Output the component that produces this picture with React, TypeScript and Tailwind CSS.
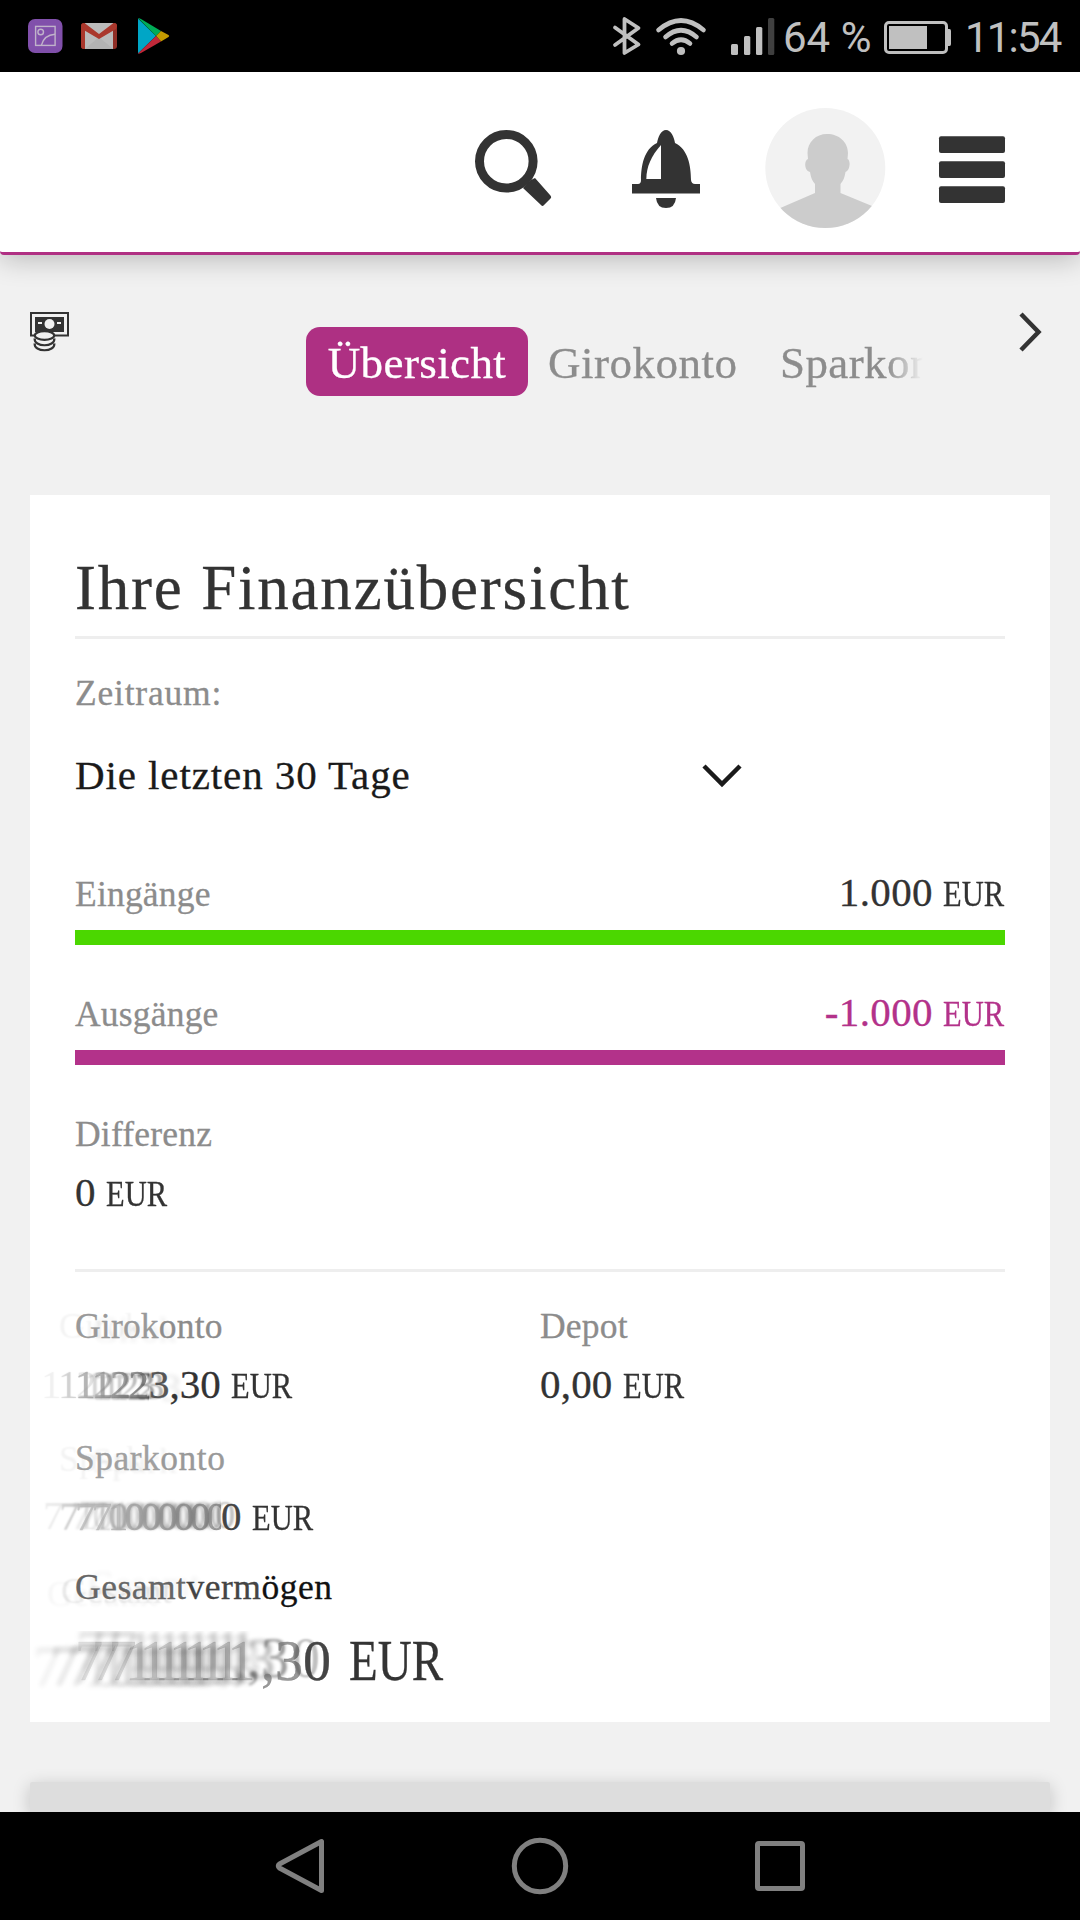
import type { ReactNode } from "react";

const StatusBar = () => (
    <div className="h-[72px] shrink-0 bg-black flex items-center">
        <svg className="w-[180px] h-[72px]" viewBox="0 0 180 72">
            {/* Galerie */}
            <rect x="28" y="19" width="34.5" height="34" rx="7" fill="#8150ab" />
            <g fill="none" stroke="#c0b3ca" strokeWidth="1.4">
                <rect x="35.6" y="26.4" width="19.5" height="19" />
                <circle cx="40.7" cy="32" r="2.8" />
                <path d="M41.3 45.4C43 39 48 34.7 55 34.3" />
            </g>
            {/* Mail */}
            <rect x="81" y="23" width="36" height="26" rx="3" fill="#8f2e26" />
            <path d="M85 23H113V49H85Z" fill="#bbb" />
            <path d="M85 49L99 37L113 49Z" fill="#b2b2b2" />
            <path d="M81 26Q81 23 84.5 23L99 34L113.5 23Q117 23 117 26L116 29L99 39L82 29Z" fill="#aa372c" />
            <path d="M81 26L85 29V49H84Q81 49 81 46Z" fill="#aa372c" />
            {/* Play Store */}
            <path d="M138 18.5L156 36L138 53.5Z" fill="#00a6c6" />
            <path d="M138 18Q139 18 141 19L161 31L156 36Z" fill="#00ac57" />
            <path d="M161 31L168.5 35Q170 36 168.5 37L161 41.5L156 36Z" fill="#c39a00" />
            <path d="M156 36L161 41.5L141 53Q139 54 138 53.5Z" fill="#c0293a" />
        </svg>
        <div className="grow" />
        <svg className="w-[170px] h-[72px]" viewBox="610 0 170 72" fill="none">
            <path d="M615 27.5L638.5 44.5L624.5 53V19L638.5 28L615 45" stroke="#c0c0c0" strokeWidth="3.8" strokeLinejoin="round" strokeLinecap="round" />
            <g stroke="#c0c0c0" strokeWidth="4.6" strokeLinecap="round">
                <path d="M658.5 30Q681 11 703.5 30" />
                <path d="M665.5 37Q681 23.5 696.5 37" />
                <path d="M672 43.5Q681 36 690 43.5" />
            </g>
            <circle cx="681" cy="51" r="4.1" fill="#c0c0c0" />
            <rect x="731" y="44" width="7" height="11" rx="1.5" fill="#c0c0c0" />
            <rect x="744" y="36" width="6.3" height="19" rx="1.5" fill="#c0c0c0" />
            <rect x="756" y="27" width="6.3" height="28" rx="1.5" fill="#c0c0c0" />
            <rect x="768" y="18" width="6.3" height="37" rx="1.5" fill="#404040" />
        </svg>
        <span className="w-[104px] pl-[3px] pt-[3px] font-[Roboto] text-[42px] leading-[72px] text-[#c0c0c0] whitespace-nowrap">64 %</span>
        <svg className="w-[70px] h-[72px]" viewBox="884 0 70 72" fill="none">
            <rect x="885.5" y="22.5" width="61" height="30" rx="3.5" stroke="#c0c0c0" strokeWidth="3" />
            <rect x="889" y="26" width="38" height="23" fill="#c0c0c0" />
            <path d="M947 29H949.5Q951 29 951 31V44Q951 46 949.5 46H947Z" fill="#c0c0c0" />
        </svg>
        <span className="w-[126px] pl-[11px] pt-[3px] font-[Roboto] text-[42px] leading-[72px] tracking-[-1.8px] text-[#c0c0c0]">11:54</span>
    </div>
);

const Header = () => (
    <header className="relative z-10 h-[183px] shrink-0 bg-white border-b-3 border-[#b03083] rounded-b-[4px] shadow-[0_4px_28px_rgba(0,0,0,0.24)] flex justify-end">
        <svg className="w-[640px] h-[180px]" viewBox="440 72 640 180">
            <g fill="#333">
                <path d="M531 180L535 178L550 195Q552 197 550.5 198.5L544 205Q542.5 207 541 205L523 188Z" />
                <circle cx="506.3" cy="161.3" r="26.8" fill="none" stroke="#333" strokeWidth="9" />
                <path d="M666 130C661 130 658 137 657 143C644 149 641 166 641 180Q641 184 638 184H632V193.5H700V184H695Q691.5 184 691 180C691 166 688 149 675 143C674 137 671 130 666 130Z" />
                <path d="M656 198H676Q675 208 666 208Q657 208 656 198Z" />
                <rect x="939" y="136.3" width="66" height="16.7" rx="2" />
                <rect x="939" y="161.3" width="66" height="16.7" rx="2" />
                <rect x="939" y="186.3" width="66" height="16.7" rx="2" />
            </g>
            <path d="M661 145V179H646.3C646.5 167 651 156 661 145Z" fill="#fff" />
            <clipPath id="avatar">
                <circle cx="825.3" cy="168" r="60" />
            </clipPath>
            <g clipPath="url(#avatar)">
                <rect x="765" y="108" width="121" height="120" fill="#f2f2f2" />
                <path
                    d="M827 134C839 134 848 142 848 153L847.5 159C851 160 850 171 845.5 172C844.5 178 843 181 840.5 184V193L872 206V230H778V209L815 193V184C812.5 181 811 178 810 172C804 171 804 160 808 159L807.5 153C807.5 142 816 134 827 134Z"
                    fill="#ccc"
                />
            </g>
        </svg>
    </header>
);

const SubNav = () => (
    <nav className="h-[240px] shrink-0 flex items-start pl-[30px] text-[45px] text-[#8c8c8c]">
        <svg className="mt-[57px] w-[40px] h-[40px] shrink-0" viewBox="0 0 40 40" fill="none">
            <rect x="1" y="1" width="37" height="22.5" stroke="#333" strokeWidth="2" />
            <rect x="5" y="5" width="29" height="15" fill="#333" />
            <circle cx="19.5" cy="12" r="5" fill="#f1f1f1" />
            <path d="M8 11H12M27 11H31" stroke="#f1f1f1" strokeWidth="2" />
            <path d="M4.5 23V34C6 40 24 40 25 34V23Z" fill="#f1f1f1" />
            <g stroke="#333" strokeWidth="2.2">
                <ellipse cx="14.5" cy="23.5" rx="9.7" ry="4.3" fill="#f1f1f1" />
                <path d="M4.7 26.5C3.5 35.5 25.5 35.5 24.3 26.5M4.7 31.5C3.5 40.5 25.5 40.5 24.3 31.5" />
            </g>
        </svg>
        <div className="mt-[72px] ml-[236px] w-[620px] flex overflow-hidden whitespace-nowrap leading-[73px] h-[69px] tracking-[0.4px] [mask-image:linear-gradient(to_right,#000_580px,transparent_617px)]">
            <span className="w-[222px] h-[69px] shrink-0 text-center rounded-[14px] bg-[#ae3083] text-white">Übersicht</span>
            <span className="ml-[20px] w-[232px] shrink-0 tracking-[0.5px]">Girokonto</span>
            <span>Sparkonto</span>
        </div>
        <svg className="mt-[57px] ml-[91px] w-[28px] h-[42px] shrink-0" viewBox="0 0 28 42" fill="none">
            <path d="M4 2L21.5 20L4 38" stroke="#333" strokeWidth="4.5" />
        </svg>
    </nav>
);

const Label = ({ children }: { children: ReactNode }) => (
    <div className="h-12 text-[35.5px] leading-[48px] tracking-[0.2px] text-[#8c8c8c] whitespace-nowrap">{children}</div>
);

// Betrag mit kleinerer Währung
const Amount = ({ children }: { children: ReactNode }) => (
    <div className="h-12 text-[41px] leading-[48px] whitespace-nowrap">
        {children}
        <span className="inline-block w-[62px] ml-[10px] text-[35.5px] leading-none">
            <span className="inline-block origin-left scale-x-[0.86]">EUR</span>
        </span>
    </div>
);

const Entry = ({ label, amount, color, bar }: { label: string; amount: string; color: string; bar: string }) => (
    <div>
        <div className={`h-12 flex justify-between items-baseline ${color}`}>
            <Label>{label}</Label>
            <Amount>
                <span className="tracking-[0.4px]">{amount}</span>
            </Amount>
        </div>
        <div className={`mt-[14px] h-[15px] ${bar}`} />
    </div>
);

const Accounts = () => (
    <div className="grid grid-cols-2">
        <div>
            <Label>
                <span className="text-[#999] [text-shadow:-16px_0_2px_rgb(0_0_0/0.05),18px_4px_4px_rgb(0_0_0/0.07)]">Girok</span>onto
            </Label>
            <div className="mt-[10px]">
                <Amount>
                    <span className="inline-block w-[114px] -ml-10 pl-10 tracking-[-2.2px] text-[#555]/70 [mask-image:linear-gradient(to_right,rgb(0_0_0/0.3)_20%,#000)] [text-shadow:-34px_0_1px_rgb(0_0_0/0.2),-17px_0_1px_rgb(0_0_0/0.35),9px_1px_2px_rgb(0_0_0/0.3),17px_2px_2px_rgb(0_0_0/0.25)]">
                        1122
                    </span>
                    <span className="text-[#555] [text-shadow:-14px_1px_2px_rgb(0_0_0/0.4),-5px_1px_2px_rgb(0_0_0/0.3),12px_3px_4px_rgb(0_0_0/0.1)]">3</span>
                    ,30
                </Amount>
            </div>
        </div>
        <div>
            <Label>Depot</Label>
            <div className="mt-[10px]">
                <Amount>
                    <span className="tracking-[0.2px]">0,00</span>
                </Amount>
            </div>
        </div>
        <div className="col-span-2 mt-[26px]">
            <Label>
                <span className="tracking-[0.5px]">
                    <span className="text-[#a0a0a0] [text-shadow:-16px_1px_2px_rgb(0_0_0/0.05),17px_3px_3px_rgb(0_0_0/0.06)]">Spark</span>
                    <span className="text-[#999]">onto</span>
                </span>
            </Label>
            <div className="mt-[10px]">
                <Amount>
                    <span className="inline-block w-[186px] -ml-10 pl-10 tracking-[-4.1px] text-[#555]/70 [mask-image:linear-gradient(to_right,rgb(0_0_0/0.3)_5%,rgb(0_0_0/0.8))] [text-shadow:-32px_-1px_2px_rgb(0_0_0/0.25),-16px_0_2px_rgb(0_0_0/0.4),3px_-2px_3px_rgb(0_0_0/0.35),-4px_-1px_3px_rgb(0_0_0/0.3)]">
                        771000000
                    </span>
                    <span className="text-[#444] [text-shadow:-6px_-2px_2px_rgb(0_0_0/0.25)]">0</span>
                </Amount>
            </div>
        </div>
    </div>
);

const Total = () => (
    <div className="mt-[23px]">
        <div className="h-12 text-[35.5px] leading-[48px] tracking-[0.5px] text-[#111]">
            <span className="text-[#666] [text-shadow:-14px_4px_2px_rgb(0_0_0/0.09),-28px_7px_3px_rgb(0_0_0/0.04),14px_-3px_4px_rgb(0_0_0/0.06)]">Gesamt</span>
            <span className="text-[#444]">verm</span>
            ögen
        </div>
        <div className="mt-5 h-[60px] text-[56px] leading-[60px] whitespace-nowrap">
            <span className="inline-block w-[238px] -ml-[52px] pl-[52px] tracking-[-11.3px] text-[#333]/22 [mask-image:linear-gradient(to_right,rgb(0_0_0/0.4)_5%,#000_80%)] [text-shadow:-42px_6px_5px_rgb(0_0_0/0.2),-24px_5px_5px_rgb(0_0_0/0.15),1px_-10px_5px_rgb(0_0_0/0.25),-3px_3px_5px_rgb(0_0_0/0.25)]">
                77711111111
            </span>
            <span className="text-[#777]/75 [text-shadow:-14px_-3px_3px_rgb(0_0_0/0.4),-28px_-2px_4px_rgb(0_0_0/0.3),-42px_-1px_5px_rgb(0_0_0/0.15)]">,3</span>
            <span className="text-[#444] [text-shadow:-11px_-3px_2px_rgb(0_0_0/0.25)]">0</span>
            <span className="inline-block ml-[18px] origin-left scale-x-[0.84]">EUR</span>
        </div>
    </div>
);

const FinanceCard = () => (
    <section className="mx-[30px] h-[1227px] shrink-0 bg-white px-[45px] pt-[63px]">
        <h1 className="pb-[18px] border-b-3 border-[#eee] text-[63px] leading-[60px] tracking-[1.8px]">Ihre Finanzübersicht</h1>
        <div className="mt-[30px] text-[35.5px] leading-[48px] tracking-[0.8px] text-[#8c8c8c]">Zeitraum:</div>
        <div className="mt-[34px] w-[668px] flex justify-between items-center text-[41px] leading-[48px] tracking-[0.9px] text-[#1a1a1a]">
            Die letzten 30 Tage
            <svg className="mt-[2px] w-[42px] h-[26px]" viewBox="0 0 42 26" fill="none">
                <path d="M3 3L21 21L39 3" stroke="#1a1a1a" strokeWidth="4.5" />
            </svg>
        </div>
        <div className="mt-[69px] flex flex-col gap-[43px]">
            <Entry label="Eingänge" amount="1.000" color="text-[#333]" bar="bg-[#4bd700]" />
            <Entry label="Ausgänge" amount="-1.000" color="text-[#b3328a]" bar="bg-[#b3328a]" />
        </div>
        <div className="mt-[45px]">
            <Label>Differenz</Label>
            <div className="mt-[10px]">
                <Amount>0</Amount>
            </div>
        </div>
        <div className="mt-[53px] mb-[30px] h-[3px] bg-[#eee]" />
        <Accounts />
        <Total />
    </section>
);

const NavigationBar = () => (
    <div className="relative z-10 h-[108px] shrink-0 bg-black">
        <svg className="w-full h-full" viewBox="0 0 1080 108" fill="none" stroke="#808080" strokeWidth="5">
            <path d="M321.5 29.5V78.5L279.5 56Q277 54 279.5 52Z" strokeLinejoin="round" />
            <circle cx="540" cy="54" r="25.7" />
            <rect x="757.5" y="31.5" width="45" height="45" rx="1.5" />
        </svg>
    </div>
);

export default function App() {
    return (
        <div className="w-[1080px] h-[1920px] overflow-hidden flex flex-col bg-[#f1f1f1] font-['Liberation_Serif',serif] text-[#333]">
            <StatusBar />
            <Header />
            <div className="contents [-webkit-text-stroke:0.3px]">
                <SubNav />
                <FinanceCard />
            </div>
            <div className="mt-[60px] mx-[30px] h-[30px] shrink-0 bg-[#ddd] rounded-t-[2px] shadow-[0_4px_18px_rgba(0,0,0,0.2)]" />
            <NavigationBar />
        </div>
    );
}
